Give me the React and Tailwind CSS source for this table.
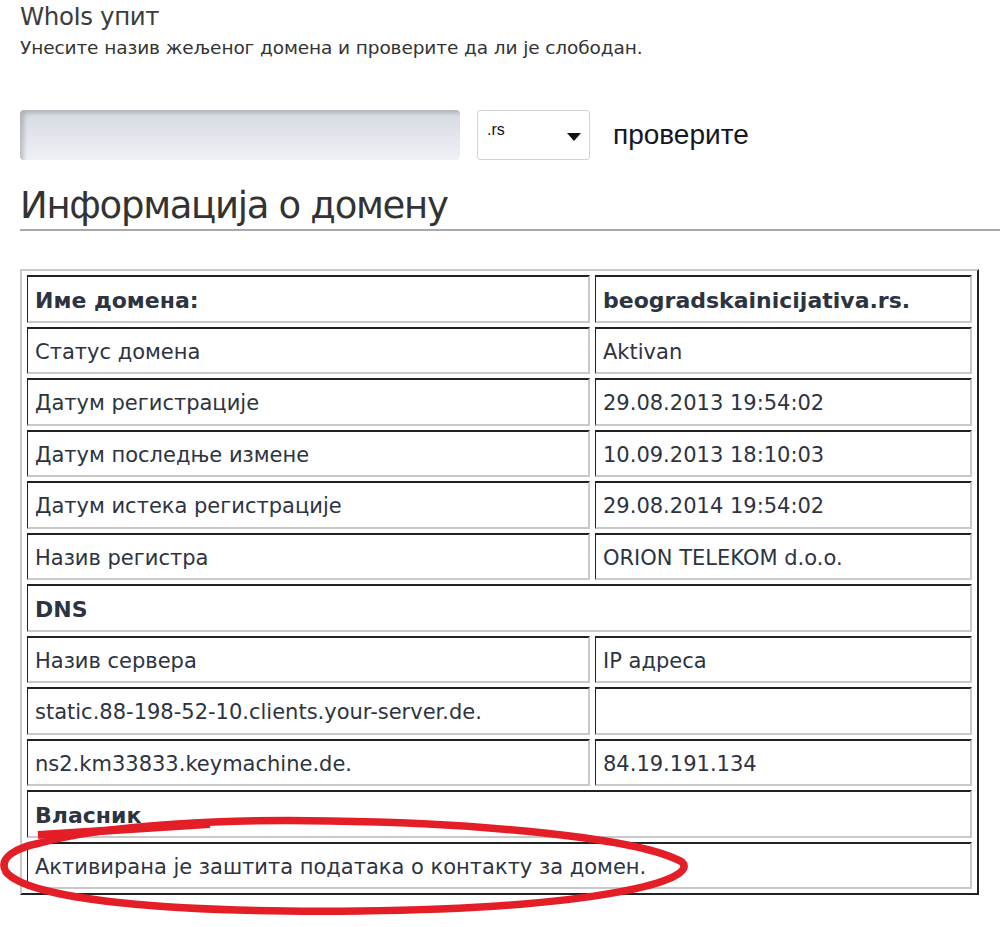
import React from "react";

const rows = [
  { type: "pair", left: "Име домена:", right: "beogradskainicijativa.rs.", bold: true },
  { type: "pair", left: "Статус домена", right: "Aktivan" },
  { type: "pair", left: "Датум регистрације", right: "29.08.2013 19:54:02" },
  { type: "pair", left: "Датум последње измене", right: "10.09.2013 18:10:03" },
  { type: "pair", left: "Датум истека регистрације", right: "29.08.2014 19:54:02" },
  { type: "pair", left: "Назив регистра", right: "ORION TELEKOM d.o.o." },
  { type: "head", left: "DNS" },
  { type: "pair", left: "Назив сервера", right: "IP адреса" },
  { type: "pair", left: "static.88-198-52-10.clients.your-server.de.", right: "" },
  { type: "pair", left: "ns2.km33833.keymachine.de.", right: "84.19.191.134" },
  { type: "head", left: "Власник" },
  { type: "full", left: "Активирана је заштита података о контакту за домен." },
];

const cell =
  "h-[47.5px] border-t-2 border-l border-b-2 border-r-2 border-t-[#222] border-l-[#222] border-b-[#c9c9c9] border-r-[#c9c9c9] px-[7px] pt-[4px] align-middle text-[#2d3441] whitespace-nowrap";

export default function App() {
  return (
    <div className="relative min-h-[927px] bg-white pl-5 text-[#333]" style={{ fontFamily: '"DejaVu Sans", Verdana, sans-serif' }}>
      {/* header */}
      <div className="pt-[2px] text-[24.5px] leading-[30px] text-[#3d3d3d] tracking-[-0.4px]">WhoIs упит</div>
      <div className="mt-[4px] text-[18.5px] leading-[24px] text-[#333] tracking-[-0.1px]">
        Унесите назив жељеног домена и проверите да ли је слободан.
      </div>

      {/* search */}
      <div className="mt-[50px] flex items-center">
        <div className="h-[50px] w-[440px] rounded-[4px] bg-gradient-to-b from-[#d5dae1] to-[#eef1f5] shadow-[inset_4px_3px_4px_rgba(0,0,0,0.18)]" />
        <div className="relative ml-[17px] h-[50px] w-[113px] rounded-[3px] border border-[#d4d4d4] bg-white">
          <span className="absolute left-[9px] top-[7px] text-[16px] text-[#111]" style={{ fontFamily: '"Liberation Sans", Arial, sans-serif' }}>.rs</span>
          <svg className="absolute right-[8px] top-[22px]" width="14" height="8" viewBox="0 0 14 8">
            <path d="M0 0 H14 L7 8 Z" fill="#111" />
          </svg>
        </div>
        <span className="ml-[23px] text-[28px] text-[#161626]" style={{ fontFamily: '"Liberation Sans", Arial, sans-serif' }}>проверите</span>
      </div>

      {/* heading */}
      <div className="mt-[24px] border-b-2 border-[#a9a9a9] pb-[1px]">
        <h1 className="text-[37px] leading-[44px] text-[#333] tracking-[-1.3px]">Информација о домену</h1>
      </div>

      {/* table */}
      <table className="mt-[38px] w-[959px] border-separate border-spacing-x-[5px] border-spacing-y-[4.5px] border-2 border-t-[#c9c9c9] border-l-[#c9c9c9] border-b-[#222] border-r-[#222]">
        <tbody>
          {rows.map((r, i) => (
            <tr key={i}>
              {r.type === "pair" ? (
                <>
                  <td className={`${cell} w-[563px] ${r.bold ? "font-bold text-[22px]" : "text-[21px]"}`}>{r.left}</td>
                  <td className={`${cell} ${r.bold ? "font-bold text-[22px]" : "text-[21px]"}`}>{r.right}</td>
                </>
              ) : (
                <td colSpan={2} className={`${cell} ${r.type === "head" ? "font-bold text-[22px]" : "text-[21px]"}`}>
                  {r.left}
                </td>
              )}
            </tr>
          ))}
        </tbody>
      </table>

      {/* red marker circle */}
      <svg className="pointer-events-none absolute left-0 top-[800px]" width="700" height="127" viewBox="0 800 700 127">
        <g fill="none" stroke="#e31e27" strokeLinecap="round">
          <path
            d="M40 843 C110 824 230 819 330 821 C480 823 640 838 682 862 C700 880 600 908 360 911 C170 913 30 900 6 872 C-2 858 15 848 40 843 Z"
            strokeWidth="7.5"
          />
          <path d="M38 835 L210 824" strokeWidth="8" strokeLinecap="butt" />
        </g>
      </svg>
    </div>
  );
}
